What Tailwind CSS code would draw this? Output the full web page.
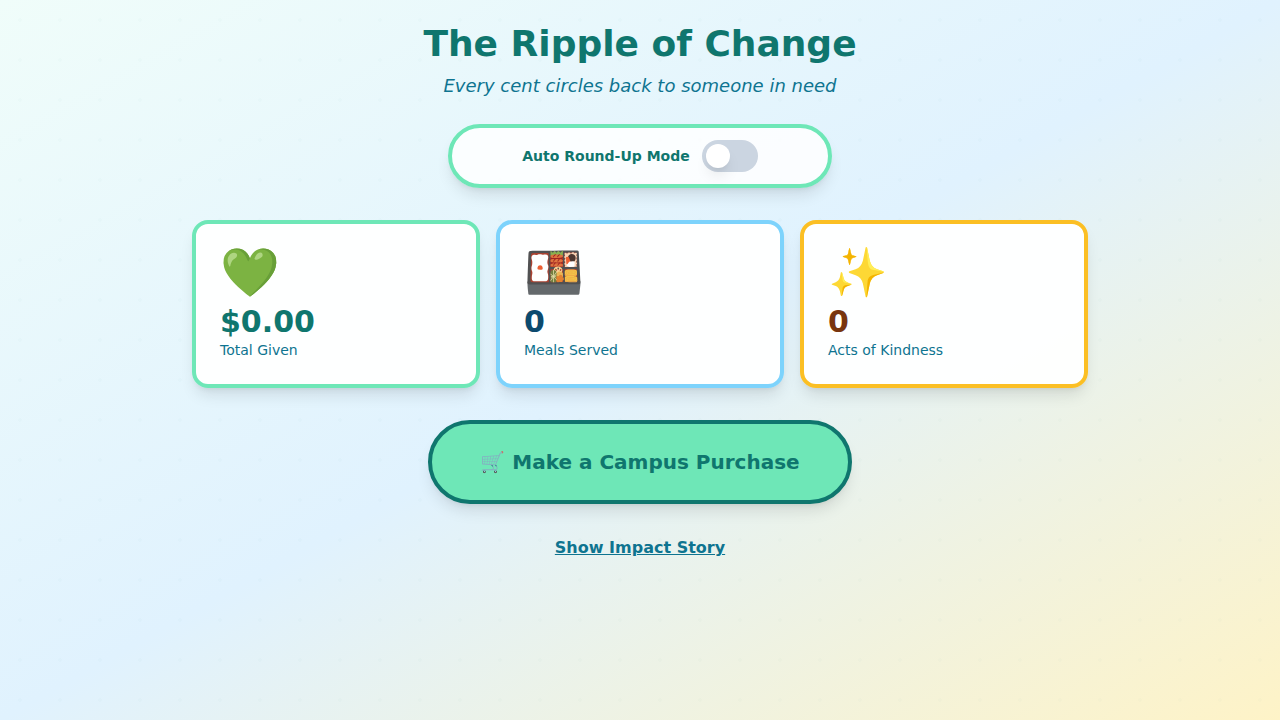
<!DOCTYPE html>
<html lang="en">
<head>
<meta charset="utf-8">
<meta name="viewport" content="width=device-width, initial-scale=1">
<title>The Ripple of Change</title>
<script src="https://cdn.jsdelivr.net/npm/@tailwindcss/browser@4"></script>
</head>
<body class="font-['DejaVu_Sans',sans-serif]">
<div class="min-h-screen bg-[linear-gradient(to_bottom_right,#f0fdfa,#e0f2fe,#fef3c7)]">
  <div class="min-h-screen bg-[radial-gradient(circle_at_center,rgb(15_118_110/0.015)_2px,transparent_2px)] bg-[length:40px_40px] px-4 py-6">
    <main class="mx-auto flex max-w-4xl flex-col items-center">
      <header class="mb-6 text-center">
        <h1 class="text-4xl font-bold text-[#0f766e]">The Ripple of Change</h1>
        <p class="mt-2 text-lg text-[#0e7490] italic">Every cent circles back to someone in need</p>
      </header>

      <label class="mb-8 flex w-full max-w-96 items-center justify-center gap-3 rounded-full border-4 border-[#6ee7b7] bg-white/85 p-3 shadow-lg">
        <span class="text-sm font-bold text-[#0f766e]">Auto Round-Up Mode</span>
        <input type="checkbox" role="switch" class="h-8 w-14 cursor-pointer appearance-none rounded-full bg-[#cbd5e1] p-1 before:block before:size-6 before:rounded-full before:bg-white before:shadow-lg checked:bg-[#10b981] checked:before:ml-6">
      </label>

      <section class="mb-8 grid w-full gap-4 sm:grid-cols-3" aria-label="Impact totals">
        <article class="rounded-2xl border-4 border-[#6ee7b7] bg-white/95 p-6 shadow-lg">
          <div class="mb-2 text-5xl leading-none">💚</div>
          <div class="text-3xl font-bold text-[#0f766e]">$0.00</div>
          <div class="text-sm text-[#0e7490]">Total Given</div>
        </article>
        <article class="rounded-2xl border-4 border-[#7dd3fc] bg-white/95 p-6 shadow-lg">
          <div class="mb-2 text-5xl leading-none">🍱</div>
          <div class="text-3xl font-bold text-[#0c4a6e]">0</div>
          <div class="text-sm text-[#0e7490]">Meals Served</div>
        </article>
        <article class="rounded-2xl border-4 border-[#fbbf24] bg-white/95 p-6 shadow-lg">
          <div class="mb-2 text-5xl leading-none">✨</div>
          <div class="text-3xl font-bold text-[#78350f]">0</div>
          <div class="text-sm text-[#0e7490]">Acts of Kindness</div>
        </article>
      </section>

      <button type="button" class="mb-8 cursor-pointer rounded-full border-4 border-[#0f766e] bg-[#6ee7b7] px-12 py-6 text-xl font-bold text-[#0f766e] shadow-lg">🛒 Make a Campus Purchase</button>
      <button type="button" class="cursor-pointer text-base font-bold text-[#0e7490] underline">Show Impact Story</button>
    </main>
  </div>
</div>
</body>
</html>
